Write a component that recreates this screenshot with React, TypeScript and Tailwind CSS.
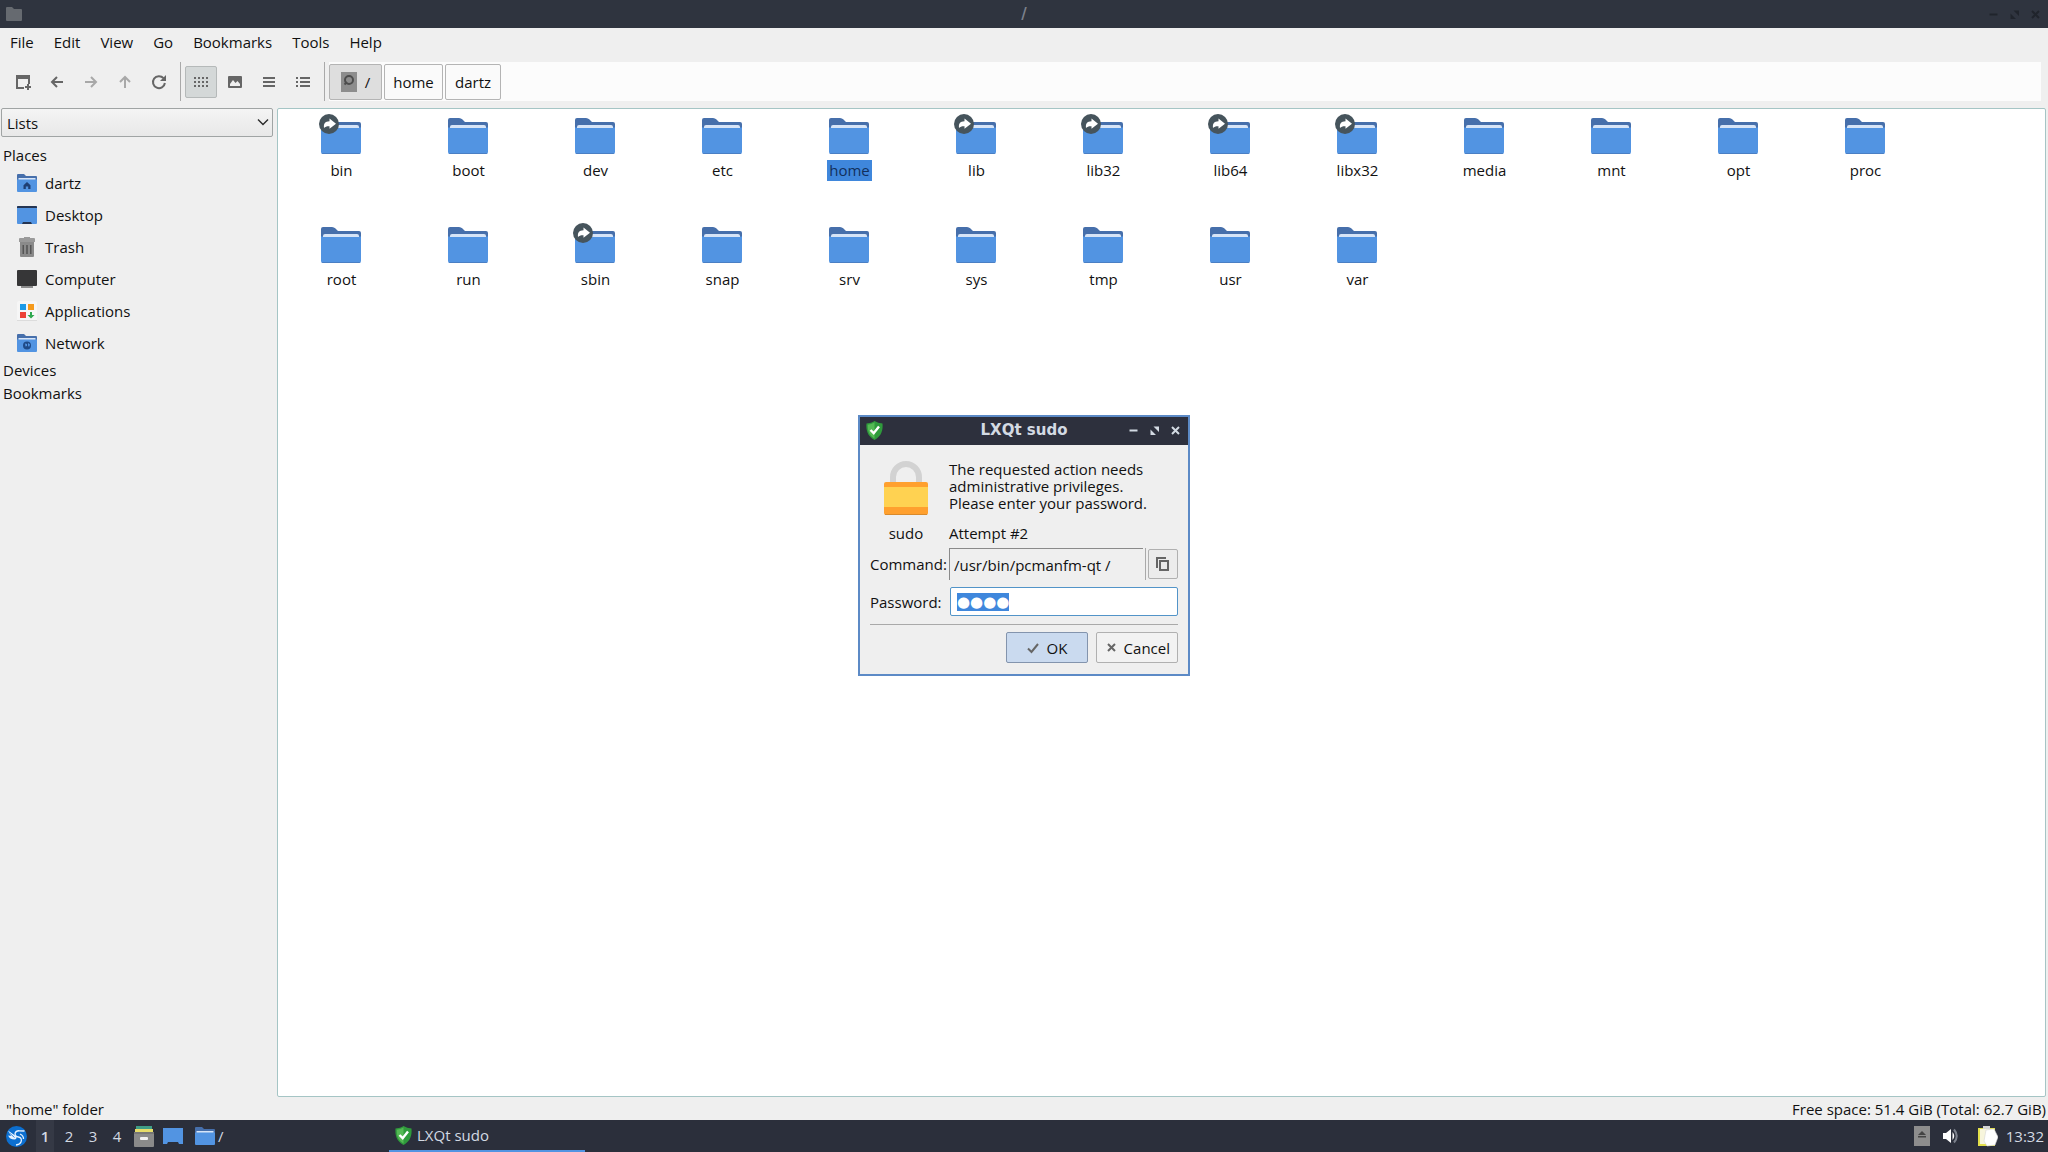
import { useEffect, useRef, useState } from 'react';
import type { ReactNode } from 'react';

const folders = [
  { name: 'bin', link: true },
  { name: 'boot' },
  { name: 'dev' },
  { name: 'etc' },
  { name: 'home' },
  { name: 'lib', link: true },
  { name: 'lib32', link: true },
  { name: 'lib64', link: true },
  { name: 'libx32', link: true },
  { name: 'media' },
  { name: 'mnt' },
  { name: 'opt' },
  { name: 'proc' },
  { name: 'root' },
  { name: 'run' },
  { name: 'sbin', link: true },
  { name: 'snap' },
  { name: 'srv' },
  { name: 'sys' },
  { name: 'tmp' },
  { name: 'usr' },
  { name: 'var' },
];

const menus = ['File', 'Edit', 'View', 'Go', 'Bookmarks', 'Tools', 'Help'];

function FolderIcon({ link }: { link?: boolean }) {
  return (
    <svg width="45" height="40" viewBox="0 0 45 40" aria-hidden="true">
      <path d="M2 8V6q0-2 2-2h9q2 0 3.500 1.500L19 8h21q2 0 2 2v6H2z" fill="#466fab" />
      <path d="M4 16v-3q0-2 2-2h32q2 0 2 2v3z" fill="#d6e4f7" />
      <path d="M2 13.500h2V14h36v-.5h2V38q0 2-2 2H4q-2 0-2-2z" fill="#5294e2" />
      <path d="M2.500 39q.5 1 1.500 1h36q1 0 1.500-1z" fill="#4a7fc4" />
      {link && (
        <>
          <circle cx="10" cy="10" r="10" fill="#46545c" />
          <path d="M10.500 4.500L17 9.800l-6.500 5v-2.600c-2.500-.2-4 .3-5.500 1.800C4.500 9.500 6 7.300 10.500 7.200z" fill="#fff" />
        </>
      )}
    </svg>
  );
}

function SmallFolder({ children }: { children?: ReactNode }) {
  return (
    <svg width="20" height="20" viewBox="0 0 20 20" aria-hidden="true">
      <path d="M0 2q0-1 1-1h6l2 2h10q1 0 1 1v4H0z" fill="#466fab" />
      <path d="M1.500 5h17v3h-17z" fill="#d6e4f7" />
      <path d="M0 6.500h20V18q0 1-1 1H1q-1 0-1-1z" fill="#5294e2" />
      {children}
    </svg>
  );
}

function ShieldIcon() {
  return (
    <svg width="17" height="19" viewBox="0 0 17 19" aria-hidden="true">
      <path d="M8.500 0Q12 2.400 16.500 2.500C17.200 10 15 15.500 8.500 19 2 15.500-.2 10 .5 2.500 5 2.400 8.500 0 8.500 0z" fill="#2f9a3c" />
      <path d="M8.500 1.500Q5 3.600 1.800 3.700C1.500 10 3.500 14.500 8.500 17.500z" fill="#55b955" />
      <path d="M4.500 9l3.200 3.200L13 5.500" fill="none" stroke="#fff" strokeWidth="2.400" />
    </svg>
  );
}

const places = [
  {
    name: 'dartz',
    icon: (
      <SmallFolder>
        <path d="M10 9l3.500 3.200V16h-2.300v-2.600H8.800V16H6.500v-3.800z" fill="#1f3f74" />
      </SmallFolder>
    ),
  },
  {
    name: 'Desktop',
    icon: (
      <svg width="20" height="20" viewBox="0 0 20 20" aria-hidden="true">
        <rect y="1" width="20" height="18" rx="1" fill="#5294e2" />
        <path d="M0 3V2q0-1 1-1h18q1 0 1 1v1z" fill="#253552" />
        <path d="M5 19l1-2h8l1 2z" fill="#253552" />
      </svg>
    ),
  },
  {
    name: 'Trash',
    icon: (
      <svg width="20" height="20" viewBox="0 0 20 20" aria-hidden="true">
        <path d="M7 0h6v1h4q1 0 1 1v3H2V2q0-1 1-1h4z" fill="#9a9a9a" />
        <path d="M3 5h14v14q0 1-1 1H4q-1 0-1-1z" fill="#8a8a8a" />
        <path d="M5.500 8h1.500v9H5.500zM9.200 8h1.600v9H9.200zM13 8h1.500v9H13z" fill="#555" />
      </svg>
    ),
  },
  {
    name: 'Computer',
    icon: (
      <svg width="20" height="20" viewBox="0 0 20 20" aria-hidden="true">
        <path d="M4 16h12v3H4z" fill="#8c8c8c" />
        <rect y="1" width="20" height="16" rx="1" fill="#363637" />
      </svg>
    ),
  },
  {
    name: 'Applications',
    icon: (
      <svg width="20" height="20" viewBox="0 0 20 20" aria-hidden="true">
        <rect width="20" height="20" rx="2" fill="#f6f6f6" />
        <rect y="19" width="20" height="1" fill="#dcdcdc" />
        <rect x="3" y="3" width="6" height="6" fill="#1d9be8" />
        <rect x="11" y="3" width="6" height="6" fill="#f59a1c" />
        <rect x="3" y="11" width="6" height="6" fill="#ec4237" />
        <path d="M13 11h2v3h2.500L14 17.500 10.500 14H13z" fill="#2fa84f" />
      </svg>
    ),
  },
  {
    name: 'Network',
    icon: (
      <SmallFolder>
        <circle cx="10" cy="12.500" r="4" fill="#1f4a87" />
        <path d="M8 10.500l2 .5v2l-1.500.5zM11 10l2 1.500-1 2.500-1-1.500z" fill="#5294e2" />
      </SmallFolder>
    ),
  },
];

const navButtons = [
  {
    label: 'New window',
    color: 'text-[#666666]',
    icon: (
      <>
        <path d="M1 1h14v9h-2V5H3v8h6v2H1z" fill="currentColor" />
        <path d="M12 10h2v2h2v2h-2v2h-2v-2h-2v-2h2z" fill="currentColor" />
      </>
    ),
  },
  {
    label: 'Back',
    color: 'text-[#666666]',
    icon: <path d="M8 3L3 8l5 5M3 8h11" fill="none" stroke="currentColor" strokeWidth="2" />,
  },
  {
    label: 'Forward',
    color: 'text-[#a8a8a8]',
    icon: <path d="M8 3l5 5-5 5M13 8H2" fill="none" stroke="currentColor" strokeWidth="2" />,
  },
  {
    label: 'Up',
    color: 'text-[#a8a8a8]',
    icon: <path d="M3 8l5-5 5 5M8 3v11" fill="none" stroke="currentColor" strokeWidth="2" />,
  },
  {
    label: 'Reload',
    color: 'text-[#666666]',
    icon: (
      <>
        <path d="M12.500 4.200A6 6 0 1 0 13.900 9" fill="none" stroke="currentColor" strokeWidth="2" />
        <path d="M15 1v6H9z" fill="currentColor" />
      </>
    ),
  },
];

const viewButtons = [
  {
    label: 'Icon view',
    icon: (
      <path
        d="M1 3h2v2H1zM5 3h2v2H5zM9 3h2v2H9zM13 3h2v2h-2zM1 7h2v2H1zM5 7h2v2H5zM9 7h2v2H9zM13 7h2v2h-2zM1 11h2v2H1zM5 11h2v2H5zM9 11h2v2H9zM13 11h2v2h-2z"
        fill="currentColor"
      />
    ),
  },
  {
    label: 'Thumbnail view',
    icon: (
      <path
        d="M2 2h12q1 0 1 1v10q0 1-1 1H2q-1 0-1-1V3q0-1 1-1zm1 10h10v-2l-2.500-3L8.500 9 6 6l-3 4z"
        fill="currentColor"
        fillRule="evenodd"
      />
    ),
  },
  {
    label: 'Compact view',
    icon: <path d="M2 3h12v2H2zM2 7h12v2H2zM2 11h12v2H2z" fill="currentColor" />,
  },
  {
    label: 'Detailed list view',
    icon: (
      <path
        d="M1 3h2v2H1zM1 7h2v2H1zM1 11h2v2H1zM5 3h10v2H5zM5 7h10v2H5zM5 11h10v2H5z"
        fill="currentColor"
      />
    ),
  },
];

function WindowControls() {
  return (
    <div className="flex gap-2">
      <button aria-label="Minimize">
        <svg width="13" height="13" viewBox="0 0 13 13">
          <path d="M2.500 5.500h8v2h-8z" fill="currentColor" />
        </svg>
      </button>
      <button aria-label="Maximize">
        <svg width="13" height="13" viewBox="0 0 13 13">
          <path d="M5.500 2.500H11V8zM2.500 5.500V11H8z" fill="currentColor" />
        </svg>
      </button>
      <button aria-label="Close">
        <svg width="13" height="13" viewBox="0 0 13 13">
          <path d="M3 3l7 7M10 3l-7 7" stroke="currentColor" strokeWidth="2" />
        </svg>
      </button>
    </div>
  );
}

function Toolbar() {
  return (
    <div className="flex h-[39px] items-center pl-[7px] pr-[7px]">
      <div className="flex gap-[2px]">
        {navButtons.map((button) => (
          <button
            key={button.label}
            aria-label={button.label}
            className={`flex size-8 items-center justify-center ${button.color}`}
          >
            <svg width="16" height="16" viewBox="0 0 16 16">{button.icon}</svg>
          </button>
        ))}
      </div>
      <div className="ml-[5px] mr-1 h-full w-px bg-[#a9a9a9]" />
      <div className="flex gap-[2px]">
        {viewButtons.map((button, index) => (
          <button
            key={button.label}
            aria-label={button.label}
            className={`flex size-8 items-center justify-center rounded-xs border text-[#666666] ${
              index === 0 ? 'border-[#b5b9b9] bg-[#d4d8d8]' : 'border-transparent'
            }`}
          >
            <svg width="16" height="16" viewBox="0 0 16 16">{button.icon}</svg>
          </button>
        ))}
      </div>
      <div className="ml-[5px] mr-1 h-full w-px bg-[#a9a9a9]" />
      <div className="flex h-full flex-1 items-center gap-[2px] bg-[#fcfcfc]">
        <button className="flex h-9 w-[53px] items-center justify-center gap-2 rounded-xs border border-[#b4b4b4] bg-[#dedede]">
          <svg width="16" height="20" viewBox="0 0 16 20" aria-hidden="true">
            <rect width="16" height="20" fill="#8d8d8d" />
            <circle cx="8" cy="8" r="4" fill="none" stroke="#4d4d4d" strokeWidth="2" />
            <path d="M3.500 12.500L6 10" stroke="#4d4d4d" strokeWidth="2" />
          </svg>
          /
        </button>
        <button className="h-9 w-[59px] rounded-xs border border-[#b4b4b4] bg-[#fafafa]">home</button>
        <button className="h-9 w-14 rounded-xs border border-[#b4b4b4] bg-[#fafafa]">dartz</button>
      </div>
    </div>
  );
}

function Sidebar() {
  return (
    <aside className="flex w-[273px] shrink-0 flex-col pl-px">
      <div className="relative">
        <select
          aria-label="Side pane mode"
          className="h-[29px] w-full appearance-none rounded-xs border border-[#a0a4a4] bg-linear-to-b from-[#f4f4f4] to-[#e8e8e8] pl-[5px]"
        >
          <option>Lists</option>
        </select>
        <svg className="pointer-events-none absolute right-1 top-2 size-3" viewBox="0 0 12 12">
          <path d="M1 3.500l5 5 5-5" fill="none" stroke="#2b2b2b" strokeWidth="1.400" />
        </svg>
      </div>
      <h2 className="mb-px mt-[7px] pl-[2px] leading-[22px]">Places</h2>
      <ul>
        {places.map((place) => (
          <li key={place.name}>
            <a href={`#${place.name}`} className="flex h-8 items-center gap-2 pl-4">
              {place.icon}
              {place.name}
            </a>
          </li>
        ))}
      </ul>
      <h2 className="pl-[2px] leading-[23px]">Devices</h2>
      <h2 className="pl-[2px] leading-[23px]">Bookmarks</h2>
    </aside>
  );
}

function SudoDialog() {
  const passwordRef = useRef<HTMLInputElement>(null);
  const [length, setLength] = useState(4);

  useEffect(() => {
    passwordRef.current?.focus();
    passwordRef.current?.select();
  }, []);

  return (
    <div
      role="dialog"
      aria-labelledby="sudo-title"
      className="absolute left-1/2 top-[415px] w-[332px] -translate-x-1/2 border-2 border-[#5c8ac6] bg-[#efefef]"
    >
      <div className="grid h-7 grid-cols-[1fr_auto_1fr] items-center bg-[#2d303d] px-[6px] pb-[2px] text-[#d3dae3]">
        <ShieldIcon />
        <h1 id="sudo-title" className="font-['DejaVu_Sans',sans-serif] text-[15px] font-bold">
          LXQt sudo
        </h1>
        <div className="flex justify-end">
          <WindowControls />
        </div>
      </div>

      <form className="px-[10px] pb-[11px] pt-4" onSubmit={(e) => e.preventDefault()}>
        <div className="grid grid-cols-[72px_1fr] gap-x-[7px]">
          <svg className="justify-self-center" width="44" height="55" viewBox="0 0 44 55" aria-hidden="true">
            <path d="M9 24V16a13 13 0 0 1 26 0v8" fill="none" stroke="#d2d2d2" strokeWidth="6" />
            <rect y="21" width="44" height="33" rx="2" fill="#ffa02e" />
            <rect y="26" width="44" height="20" fill="#ffd251" />
            <path d="M1 53.500h42" stroke="#d98a2c" />
          </svg>
          <p className="leading-[17px]">
            The requested action needs
            <br />
            administrative privileges.
            <br />
            Please enter your password.
          </p>
          <p className="mt-[7px] text-center leading-[21px]">sudo</p>
          <p className="mt-[7px] leading-[21px]">Attempt #2</p>
        </div>

        <div className="mt-1 flex items-center">
          <label htmlFor="command" className="w-[79px]">Command:</label>
          <input
            id="command"
            readOnly
            value="/usr/bin/pcmanfm-qt /"
            className="h-8 w-0 flex-1 border-l border-t border-[#8a8a8a] bg-transparent pl-1 outline-none"
          />
          <div className="ml-[2px] h-8 w-px bg-[#a9a9a9]" />
          <button
            type="button"
            aria-label="Copy command"
            className="ml-[2px] flex size-[30px] items-center justify-center rounded-xs border border-[#b0b0b0] bg-[#ececec]"
          >
            <svg width="16" height="16" viewBox="0 0 16 16" fill="none" stroke="#666" strokeWidth="2">
              <path d="M2 12V2h9" />
              <path d="M5 5h8v9H5z" />
            </svg>
          </button>
        </div>

        <div className="mt-[7px] flex items-center">
          <label htmlFor="password" className="w-20">Password:</label>
          <input
            id="password"
            ref={passwordRef}
            autoComplete="off"
            value={'●'.repeat(length)}
            onChange={(e) => setLength(e.target.value.length)}
            className="h-[29px] w-0 flex-1 rounded-xs border border-[#5294c8] bg-white pl-[6px] font-['DejaVu_Sans',sans-serif] text-[15px] outline-none selection:bg-[#3f87dc] selection:text-white"
          />
        </div>

        <div className="mt-2 border-t border-[#a9a9a9]" />
        <div className="mt-[7px] flex justify-end gap-2">
          <button className="flex h-[31px] w-[82px] items-center justify-center gap-2 rounded-xs border border-[#8394ad] bg-[#cadaef]">
            <svg width="12" height="12" viewBox="0 0 12 12" fill="none" stroke="#666" strokeWidth="2">
              <path d="M1 6.500l3.500 3.500L11 2" />
            </svg>
            OK
          </button>
          <button
            type="button"
            className="flex h-[31px] w-[82px] items-center justify-end gap-2 rounded-xs border border-[#b0b0b0] bg-[#f2f2f2] pr-[7px]"
          >
            <svg width="9" height="9" viewBox="0 0 9 9" fill="none" stroke="#666" strokeWidth="2">
              <path d="M1 1l7 7M8 1L1 8" />
            </svg>
            Cancel
          </button>
        </div>
      </form>
    </div>
  );
}

function Taskbar() {
  return (
    <footer className="flex h-8 items-center bg-[#2b2f3b] text-[#d3dae3]">
      <button aria-label="Application menu" className="ml-[6px]">
        <svg width="21" height="21" viewBox="0 0 21 21">
          <circle cx="10.500" cy="10.500" r="10.500" fill="#0c6fd0" />
          <path d="M2 4.500L10.500 10.500Q11 13 8.500 13.500 3.500 13.500 2.200 9.500L5 10z" fill="#e8f3ff" />
          <path d="M3.500 7l5 4.500" stroke="#0c6fd0" strokeWidth=".8" />
          <path
            d="M9 7.500q1-3 4.500-2.700l5 .2M9 7.500q0 3 3.500 3.500 4 1 2.500 5-1 2.500-5 3M14 8q3.500 1.500 3.500 5"
            fill="none"
            stroke="#e8f3ff"
            strokeWidth="1.300"
          />
        </svg>
      </button>
      <div className="ml-[9px] flex text-center">
        <button className="h-8 w-[18px] bg-[#353945] font-semibold">1</button>
        <button className="ml-[3px] w-6">2</button>
        <button className="w-6">3</button>
        <button className="w-6">4</button>
      </div>
      <button aria-label="File manager" className="ml-1">
        <svg width="22" height="22" viewBox="0 0 22 22">
          <path d="M3 1h16v3H3z" fill="#3f9e86" />
          <path d="M2 4h18v3H2z" fill="#e6dc6a" />
          <path d="M1 7h20v14q0 1-1 1H2q-1 0-1-1z" fill="#8a8a8a" />
          <path d="M1 7h20v2H1z" fill="#777" />
          <rect x="7" y="12" width="8" height="3" rx="1" fill="#f2f2f2" />
        </svg>
      </button>
      <button aria-label="Show desktop" className="ml-2">
        <svg width="20" height="18" viewBox="0 0 20 18">
          <path d="M0 1h20v16h-4l-1-2H5l-1 2H0z" fill="#5294e2" />
        </svg>
      </button>
      <button className="ml-3 flex w-[194px] items-center gap-[3px]">
        <SmallFolder />
        /
      </button>
      <button className="flex h-full w-[196px] items-center gap-[5px] border-b-2 border-[#5294e2] pl-[6px]">
        <ShieldIcon />
        LXQt sudo
      </button>
      <div className="ml-auto flex items-center pr-1">
        <svg width="16" height="20" viewBox="0 0 16 20" aria-hidden="true">
          <rect width="16" height="20" fill="#8d8d8d" />
          <path d="M8 5l4 4H4zM4 10h8v1.500H4z" fill="#444" />
        </svg>
        <svg className="ml-[13px]" width="17" height="16" viewBox="0 0 17 16" aria-hidden="true">
          <path d="M0 5h3l5-4v14l-5-4H0z" fill="#fff" />
          <path d="M9.500 4q3.500 4 0 8z" fill="#fff" />
          <path d="M11 1.500q5.500 6.500 0 13" fill="none" stroke="#7c818c" strokeWidth="2" />
        </svg>
        <svg className="ml-[18px]" width="20" height="21" viewBox="0 0 20 21" aria-hidden="true">
          <path d="M0 2h17v18H0z" fill="#e3e04a" />
          <path d="M2 3h13v15H2z" fill="#f7f5dc" />
          <path d="M5 0h7v3H5z" fill="#d5d5d5" />
          <path d="M8 4l8-1 4 8-3 8-8 1-3-5z" fill="#fff" stroke="#d5d5d5" strokeWidth=".6" />
        </svg>
        <time className="ml-2">13:32</time>
      </div>
    </footer>
  );
}

export default function App() {
  const [selected, setSelected] = useState('home');

  return (
    <div className="relative flex h-screen flex-col overflow-hidden bg-[#efefef] font-['Open_Sans',sans-serif] text-[15px] leading-5 text-[#111111]">
      <header className="grid h-7 grid-cols-[1fr_auto_1fr] items-center bg-[#2f343f] px-[6px] text-[#7c818c]">
        <svg width="16" height="16" viewBox="0 0 16 16" aria-hidden="true">
          <path d="M0 2q0-1 1-1h5l2 2h7q1 0 1 1v10q0 1-1 1H1q-1 0-1-1z" fill="#666a70" />
        </svg>
        <span className="font-['DejaVu_Sans',sans-serif] text-[15px] font-bold">/</span>
        <div className="flex justify-end text-[#20242c]">
          <WindowControls />
        </div>
      </header>

      <nav className="flex h-[34px] items-center gap-5 pb-[6px] pl-[10px]">
        {menus.map((menu) => (
          <button key={menu}>{menu}</button>
        ))}
      </nav>

      <Toolbar />

      <div className="mt-[7px] flex min-h-0 flex-1 gap-1">
        <Sidebar />
        <main className="mr-[2px] flex flex-1 flex-wrap content-start rounded-xs border border-[#a5c5c5] bg-white pt-[5px]">
          {folders.map((folder) => (
            <button
              key={folder.name}
              onClick={() => setSelected(folder.name)}
              className="flex h-[109px] w-[127px] flex-col items-center"
            >
              <FolderIcon link={folder.link} />
              <span className={`mt-[6px] px-[2px] leading-[21px] ${folder.name === selected ? 'bg-[#3f87dc] text-[#12305c]' : ''}`}>
                {folder.name}
              </span>
            </button>
          ))}
        </main>
      </div>

      <div className="flex h-[23px] items-center justify-between pl-[6px] pr-[2px]">
        <span>"{selected}" folder</span>
        <span>Free space: 51.4 GiB (Total: 62.7 GiB)</span>
      </div>

      <Taskbar />
      <SudoDialog />
    </div>
  );
}
